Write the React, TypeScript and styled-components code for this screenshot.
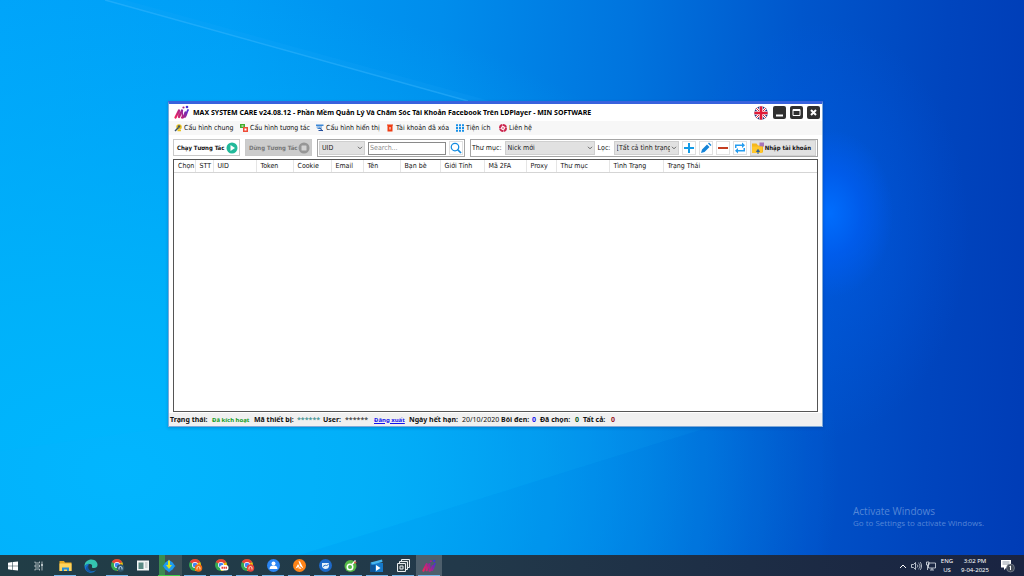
import React from 'react';
import styled, { createGlobalStyle } from 'styled-components';

const GlobalStyle = createGlobalStyle`
  * { box-sizing: border-box; }
  body { margin: 0; overflow: hidden; }
  button, input, select { font: inherit; color: inherit; margin: 0; padding: 0; border-radius: 0; }
  svg { display: block; flex: none; }
`;

const Desktop = styled.div`
  position: relative;
  display: flex;
  flex-direction: column;
  justify-content: flex-end;
  min-height: 100vh;
  overflow: hidden;
  font-family: 'DejaVu Sans Condensed', 'Noto Sans', sans-serif;
  font-size: 7px;
  line-height: 10px;
  color: #111;
  background:
    radial-gradient(ellipse 64px 84px at 81% 37%, rgba(0, 110, 255, 0.95), rgba(0, 96, 250, 0.55) 50%, rgba(0, 90, 240, 0) 100%),
    radial-gradient(ellipse 150px 210px at 80% 40%, rgba(0, 96, 240, 0.5), rgba(0, 90, 230, 0) 100%),
    radial-gradient(ellipse 70% 85% at 12% 82%, rgba(0, 184, 255, 0.95), rgba(0, 180, 250, 0.85) 35%, rgba(0, 168, 245, 0) 100%),
    linear-gradient(93deg, #00a4fa 0%, #009df6 22%, #008dec 42%, #0074de 60%, #0056cc 76%, #0045be 90%, #003cb6 100%);
`;

const Rays = styled.svg`
  position: absolute;
  inset: 0;
  width: 100%;
  height: 100%;
`;

const Window = styled.main`
  position: absolute;
  top: 101px;
  right: 201px;
  bottom: 149px;
  left: 168px;
  display: flex;
  flex-direction: column;
  background: #fff;
  border: 1px solid #7ea9d8;
  border-top: 3px solid #3862dd;
  box-shadow: 0 1px 3px rgba(0, 30, 90, 0.25);
`;

const TitleBar = styled.header`
  display: flex;
  align-items: center;
  gap: 4px;
  height: 17px;
  padding: 0 2px 0 5px;
`;

const Title = styled.h1`
  flex: 1;
  margin: 0;
  font-family: 'Noto Sans', sans-serif;
  font-size: 7px;
  line-height: 10px;
  color: #000;
  white-space: nowrap;
`;

const WindowButton = styled.button`
  display: flex;
  align-items: center;
  justify-content: center;
  width: 13px;
  height: 13px;
  border: 0;
  border-radius: 2px;
  background: #303030;
`;

const FlagButton = styled(WindowButton)`
  background: none;
  margin-right: 2px;
`;

const Menu = styled.nav`
  display: flex;
  align-items: center;
  height: 14px;
  padding-left: 5px;
  background: #f7f7f7;
`;

const MenuItem = styled.button<{ $w: number }>`
  display: flex;
  align-items: center;
  gap: 2px;
  width: ${(p) => p.$w}px;
  border: 0;
  background: none;
  white-space: nowrap;
`;

const Toolbar = styled.section`
  display: flex;
  gap: 5px;
  padding: 4px 4px 2px;
`;

const RunButton = styled.button`
  display: flex;
  align-items: center;
  justify-content: space-between;
  width: 67px;
  height: 17px;
  padding: 0 1px 0 3px;
  border: 1px solid #c9c9c9;
  background: #fff;
  font-weight: bold;
  font-size: 6px;
  white-space: nowrap;
  &:disabled { color: #777; background: #ccc; }
`;

const Group = styled.div<{ $grow?: boolean }>`
  display: flex;
  align-items: center;
  gap: 3px;
  flex: ${(p) => (p.$grow ? '1' : 'none')};
  min-width: 0;
  height: 18px;
  padding: 0 1px;
  border: 1px solid #a5a5a5;
  background: #fff;
  white-space: nowrap;
`;

const SelectBox = styled.span<{ $w: number }>`
  display: grid;
  flex: none;
  align-items: center;
  width: ${(p) => p.$w}px;
  height: 14px;
  color: #222;
  select {
    grid-area: 1 / 1;
    width: 100%;
    height: 14px;
    padding: 0 8px 0 2px;
    appearance: none;
    border: 1px solid #cfcfcf;
    background: #e1e1e1;
  }
  svg { grid-area: 1 / 1; justify-self: end; margin-right: 2px; pointer-events: none; }
`;

const SearchInput = styled.input`
  width: 78px;
  height: 13px;
  padding: 0 1px;
  border: 1px solid #8a8a8a;
  background: #fff;
  &::placeholder { color: #8c8c8c; opacity: 1; }
`;

const IconButton = styled.button`
  display: flex;
  flex: none;
  align-items: center;
  justify-content: center;
  width: 14px;
  height: 14px;
  border: 1px solid #e0e0e0;
  background: #fff;
`;

const ImportButton = styled.button`
  display: flex;
  flex: 1;
  align-items: center;
  justify-content: space-between;
  height: 16px;
  padding: 0 4px 0 0;
  border: 1px solid #d0d0d0;
  background: #e1e1e1;
  font-size: 6px;
  font-weight: bold;
  white-space: nowrap;
`;

const GridPanel = styled.section`
  flex: 1;
  margin: 0 4px;
  border: 1px solid #555;
  background: #fff;
`;

const Grid = styled.table`
  width: 100%;
  table-layout: fixed;
  border-collapse: collapse;
`;

const HeadCell = styled.th<{ $w?: number }>`
  width: ${(p) => (p.$w ? p.$w + 'px' : 'auto')};
  height: 12px;
  padding: 0 0 0 4px;
  border-right: 1px solid #e5e5e5;
  border-bottom: 1px solid #d5d5d5;
  font-weight: normal;
  text-align: left;
  white-space: nowrap;
  &:last-child { border-right: 0; }
`;

const StatusBar = styled.footer`
  display: flex;
  align-items: center;
  height: 13px;
  margin-top: 1px;
  padding-left: 1px;
  background: #f0f0f0;
  font-family: 'Noto Sans', sans-serif;
  white-space: nowrap;
`;

const Status = styled.span<{ $w: number; $color?: string; $plain?: boolean; $small?: boolean }>`
  width: ${(p) => p.$w}px;
  color: ${(p) => p.$color ?? '#111'};
  font-weight: ${(p) => (p.$plain ? 'normal' : 'bold')};
  font-size: ${(p) => (p.$small ? 6 : 7)}px;
`;

const Activate = styled.aside`
  position: absolute;
  left: calc(100% - 171px);
  bottom: 47px;
  color: #6f9bdf;
  font-family: 'Open Sans', sans-serif;
  font-size: 8px;
  line-height: 12px;
  white-space: nowrap;
  opacity: 0.75;
  strong { display: block; font-size: 10px; font-weight: normal; }
`;

const Taskbar = styled.footer`
  position: relative;
  display: flex;
  align-items: stretch;
  height: 21px;
  background: linear-gradient(90deg, #213d46 0%, #22394a 45%, #1b2843 85%, #1a2442 100%);
  color: #fff;
  font-family: 'Noto Sans', sans-serif;
  font-size: 6px;
  line-height: 9px;
`;

const TaskButton = styled.button<{ $state?: 'open' | 'progress' | 'active' }>`
  display: flex;
  align-items: center;
  justify-content: center;
  width: 26px;
  border: 0;
  background:
    ${(p) => (p.$state ? `linear-gradient(${p.$state === 'progress' ? '#3fd04a, #3fd04a' : '#76b9ed, #76b9ed'}) bottom / 22px 1px no-repeat,` : '')}
    ${(p) => p.$state === 'progress'
      ? 'linear-gradient(90deg, transparent 3px, #3c8a50 3px, #3c8a50 9px, #3d5158 9px)'
      : p.$state === 'active' ? 'linear-gradient(#4d5f6c, #4d5f6c)' : 'linear-gradient(transparent, transparent)'};
`;

const Tray = styled.div`
  display: flex;
  align-items: center;
  gap: 4px;
  margin-left: auto;
`;

const TrayText = styled.div<{ $w: number }>`
  width: ${(p) => p.$w}px;
  text-align: center;
  white-space: nowrap;
`;

const TrayEnd = styled.div`
  display: flex;
  align-items: center;
  align-self: stretch;
  width: 28px;
  padding-left: 4px;
`;

const Logo = ({ size = 15 }: { size?: number }) => (
  <svg width={size} height={size} viewBox="0 0 30 30" fill="none" strokeLinecap="round" aria-hidden="true">
    <defs>
      <linearGradient id="logo" gradientUnits="userSpaceOnUse" x1="2" y1="24" x2="28" y2="8">
        <stop offset="0" stopColor="#f0245c" /><stop offset="0.5" stopColor="#a8248c" /><stop offset="1" stopColor="#4530d8" />
      </linearGradient>
    </defs>
    <g stroke="url(#logo)" strokeWidth="4.500">
      <path d="M3 25 10 11M10 24l6-13M16 25c5 0 5-6 7-10" />
      <path d="M10 11v12M16 11l1 13" strokeWidth="3" />
      <path d="M22 24c3-3 3-9 6-14" strokeWidth="3.500" />
    </g>
    <circle cx="19" cy="5" r="2.200" fill="#a8248c" /><circle cx="26" cy="4" r="2.600" fill="#4530d8" />
  </svg>
);

const Caret = () => (
  <svg width="6" height="4" viewBox="0 0 6 4" fill="none" stroke="#666" aria-hidden="true"><path d="m1 .8 2 2 2-2" /></svg>
);

const Chrome = ({ badge, label }: { badge: string; label?: string }) => (
  <svg width="15" height="15" viewBox="0 0 30 30" aria-hidden="true">
    <circle cx="14" cy="14" r="12" fill="#35a853" />
    <path d="M14 14 24.4 8A12 12 0 0 1 14 26z" fill="#fbbc05" />
    <path d="M14 14 3.6 8a12 12 0 0 1 20.800 0z" fill="#ea4335" />
    <circle cx="14" cy="14" r="6" fill="#fff" /><circle cx="14" cy="14" r="4.600" fill="#4285f4" />
    {label === 'wide'
      ? <><rect x="12" y="14" width="17" height="11" rx="5" fill="#fff" /><path d="M15 19.500h11" stroke={badge} strokeWidth="4" strokeDasharray="3 1" /></>
      : <><circle cx="21" cy="20" r="7.500" fill={badge} /><path d="M18 23v-3a3 3 0 0 1 6 0v3" stroke={label === 'dark' ? '#bfe3ff' : '#ffe3c4'} strokeWidth="2" fill="none" /></>}
  </svg>
);

const columns: [string, number?][] = [
  ['Chọn', 21], ['STT', 18], ['UID', 43], ['Token', 37], ['Cookie', 38], ['Email', 32], ['Tên', 37],
  ['Bạn bè', 40], ['Giới Tính', 44], ['Mã 2FA', 42], ['Proxy', 30], ['Thư mục', 53], ['Tình Trạng', 54], ['Trạng Thái'],
];

export default function App() {
  return (
    <Desktop>
      <GlobalStyle />
      <Rays viewBox="0 0 1024 576" preserveAspectRatio="none" aria-hidden="true">
        <path d="M105 0 470 101H490L125 0z" fill="#32b4ff" opacity=".1" />
        <path d="M105 0 468 101" stroke="#45bcff" strokeWidth="1.500" opacity=".4" />
        <path d="M0 451 170 427H710L300 555H0z" fill="#20b8ff" opacity=".05" />
        <path d="M300 555 710 427H823V576H300z" fill="#0058d8" opacity=".06" />
      </Rays>

      <Window>
        <TitleBar>
          <Logo />
          <Title>MAX SYSTEM CARE v24.08.12 - Phần Mềm Quản Lý Và Chăm Sóc Tài Khoản Facebook Trên LDPlayer - MIN SOFTWARE</Title>
          <FlagButton aria-label="English">
            <svg width="14" height="14" viewBox="0 0 28 28">
              <clipPath id="flag"><circle cx="14" cy="14" r="13.500" /></clipPath>
              <g clipPath="url(#flag)">
                <path fill="#22357e" d="M0 0h28v28H0z" />
                <path d="m2 2 24 24M26 2 2 26" stroke="#fff" strokeWidth="5" />
                <path d="m2 2 24 24M26 2 2 26" stroke="#d8203c" strokeWidth="2" />
                <path d="M14 0v28M0 14h28" stroke="#fff" strokeWidth="7" />
                <path d="M14 0v28M0 14h28" stroke="#e01a38" strokeWidth="5" />
              </g>
            </svg>
          </FlagButton>
          <WindowButton aria-label="Minimize"><svg width="13" height="13" viewBox="0 0 13 13"><path d="M3 9.500h7" stroke="#fff" strokeWidth="2" /></svg></WindowButton>
          <WindowButton aria-label="Maximize"><svg width="13" height="13" viewBox="0 0 13 13" fill="none" stroke="#fff"><path d="M3 3.500h7v6H3z" /><path d="M3 4.500h7" /></svg></WindowButton>
          <WindowButton aria-label="Close"><svg width="13" height="13" viewBox="0 0 13 13"><path d="m4 4 5 5M9 4 4 9" stroke="#fff" strokeWidth="2" /></svg></WindowButton>
        </TitleBar>

        <Menu>
          <MenuItem $w={66}>
            <svg width="8" height="8" viewBox="0 0 16 16"><circle cx="10" cy="6" r="5.500" fill="#e8c11c" /><path d="m2 14 7-7" stroke="#35506c" strokeWidth="3" /><circle cx="10" cy="5" r="2.500" fill="#405a70" /><path d="M7 13h7" stroke="#e8c11c" strokeWidth="3" /></svg>
            Cấu hình chung
          </MenuItem>
          <MenuItem $w={76}>
            <svg width="8" height="8" viewBox="0 0 16 16"><path fill="#43ad2f" d="M0 0h10v8H0z" /><path fill="#fff" d="M3 3h4v2H3z" /><path fill="#ef4c38" d="M6 6h10v10H6z" /><path fill="#fff" d="M9 9h4v4H9z" /></svg>
            Cấu hình tương tác
          </MenuItem>
          <MenuItem $w={70}>
            <svg width="8" height="8" viewBox="0 0 16 16"><path fill="#3c87d6" d="M0 1h15v3H0zM1 5h11v2H1zM3 8h8v2H3z" /><path d="m7 8 7 6M5 13h9" stroke="#254f9e" strokeWidth="2" /></svg>
            Cấu hình hiển thị
          </MenuItem>
          <MenuItem $w={70}>
            <svg width="8" height="8" viewBox="0 0 16 16"><path fill="#f03d13" d="M3 3h10v12H3zM2 1h12v2H2z" /><path fill="#fff" d="M7 6h2v5H7z" /></svg>
            Tài khoản đã xóa
          </MenuItem>
          <MenuItem $w={43}>
            <svg width="8" height="8" viewBox="0 0 16 16"><path d="M0 2.500h16M0 8h16M0 13.500h16" stroke="#1790e8" strokeWidth="4" strokeDasharray="4 2" /></svg>
            Tiện ích
          </MenuItem>
          <MenuItem $w={40}>
            <svg width="8" height="8" viewBox="0 0 16 16"><circle cx="8" cy="8" r="6" fill="#fff" stroke="#cc2850" strokeWidth="4" strokeDasharray="8 1" /><circle cx="8" cy="8" r="2" fill="#e27a93" /></svg>
            Liên hệ
          </MenuItem>
        </Menu>

        <Toolbar>
          <RunButton>
            Chạy Tương Tác
            <svg width="12" height="12" viewBox="0 0 24 24"><circle cx="12" cy="12" r="11" fill="#22b99a" /><path d="m9 6 9 6-9 6z" fill="#fff" /></svg>
          </RunButton>
          <RunButton disabled>
            Dừng Tương Tác
            <svg width="12" height="12" viewBox="0 0 24 24"><circle cx="12" cy="12" r="11" fill="#969696" /><rect x="7" y="7" width="10" height="10" rx="1" fill="#d2d2d2" /></svg>
          </RunButton>
          <Group>
            <SelectBox $w={46}><select aria-label="Search field"><option>UID</option></select><Caret /></SelectBox>
            <SearchInput aria-label="Search" placeholder="Search..." />
            <IconButton aria-label="Search">
              <svg width="12" height="12" viewBox="0 0 24 24" fill="none" stroke="#148be0"><circle cx="10" cy="10" r="7.500" strokeWidth="2.500" /><path d="m15 15 7 7" strokeWidth="3.500" /></svg>
            </IconButton>
          </Group>
          <Group $grow>
            <label htmlFor="folder">Thư mục:</label>
            <SelectBox $w={90}><select id="folder"><option>Nick mới</option></select><Caret /></SelectBox>
            <label htmlFor="filter">Lọc:</label>
            <SelectBox $w={65}><select id="filter"><option>[Tất cả tình trạng]</option></select><Caret /></SelectBox>
            <IconButton aria-label="Add"><svg width="12" height="12" viewBox="0 0 12 12"><path d="M6 1v10M1 6h10" stroke="#149be6" strokeWidth="2" /></svg></IconButton>
            <IconButton aria-label="Edit"><svg width="12" height="12" viewBox="0 0 24 24" fill="#1584d8"><path d="m2 22 2-7L14 5l5 5L9 20zM16 3l2-2 5 5-2 2z" /></svg></IconButton>
            <IconButton aria-label="Remove"><svg width="12" height="12" viewBox="0 0 12 12"><path d="M1 6h10" stroke="#c43d20" strokeWidth="2" /></svg></IconButton>
            <IconButton aria-label="Refresh"><svg width="12" height="12" viewBox="0 0 24 24" fill="#259df0"><path d="M2 12V5h14V1l6 5.500-6 5.500V8H5v4zM22 12v7H8v4l-6-5.500L8 12v4h11v-4z" /></svg></IconButton>
            <ImportButton>
              <svg width="14" height="14" viewBox="0 0 28 28"><path d="M2 5h9l3 4h10v14H2z" fill="#f5b81d" /><path d="M17 3h9v8h-9z" fill="#a874b8" /><path d="M2 11h20v13H2z" fill="#ffc72b" /><path d="M14 26v-6M11 21l3-4 3 4z" stroke="#295f9c" strokeWidth="2" fill="#295f9c" /></svg>
              Nhập tài khoản
            </ImportButton>
          </Group>
        </Toolbar>

        <GridPanel>
          <Grid>
            <thead><tr>{columns.map(([name, w]) => <HeadCell key={name} $w={w} scope="col">{name}</HeadCell>)}</tr></thead>
          </Grid>
        </GridPanel>

        <StatusBar>
          <Status $w={42}>Trạng thái:</Status>
          <Status $w={42} $small $color="#119a1c">Đã kích hoạt</Status>
          <Status $w={43}>Mã thiết bị:</Status>
          <Status $w={26} $plain $color="#117d7d">******</Status>
          <Status $w={22}>User:</Status>
          <Status $w={29} $plain>******</Status>
          <Status $w={35} as="a" href="#logout" $small $color="#1414ee">Đăng xuất</Status>
          <Status $w={53}>Ngày hết hạn:</Status>
          <Status $w={39} $plain>20/10/2020</Status>
          <Status $w={31}>Bôi đen:</Status>
          <Status $w={8} $color="#1414ee">0</Status>
          <Status $w={35}>Đã chọn:</Status>
          <Status $w={8} $color="#0b5a22">0</Status>
          <Status $w={28}>Tất cả:</Status>
          <Status $w={8} $color="#99151f">0</Status>
        </StatusBar>
      </Window>

      <Activate>
        <strong>Activate Windows</strong>
        Go to Settings to activate Windows.
      </Activate>

      <Taskbar>
        <TaskButton aria-label="Start"><svg width="10" height="10" viewBox="0 0 18 18" fill="#fff"><path d="m0 3 8-1v6.500H0zM9 2l9-1v7.500H9zM0 9.500h8V16l-8-1zM9 9.500h9V17l-9-1z" /></svg></TaskButton>
        <TaskButton aria-label="Task view"><svg width="10" height="10" viewBox="0 0 20 20" fill="none" stroke="#d5dcdf" strokeWidth="1.500"><path d="M2 1v3h9V1M2 8h9v4H2zM2 19v-3h9v3M16 1v18" /><path d="M14 8h4" strokeWidth="3" /></svg></TaskButton>
        <TaskButton $state="open" aria-label="File Explorer"><svg width="13" height="13" viewBox="0 0 26 26"><path d="M1 4h9l2 3h13v17H1z" fill="#e9a922" /><path d="M1 9h24v15H1z" fill="#ffd45c" /><path d="M6 24v-7h14v7h-4v-3h-6v3z" fill="#278ed8" /></svg></TaskButton>
        <TaskButton aria-label="Edge"><svg width="14" height="14" viewBox="0 0 28 28"><path d="M1 15C1 5 8 1 15 1c8 0 12 6 12 11 0 4-3 6-7 6-3 0-5-1-4-3 1-3-1-5-4-5C6 10 3 12 1 15z" fill="#35c5b0" /><path d="M1 15c2-4 6-6 10-6-5 3-5 12 2 15 3 1 7 1 11-2-4 6-10 6-14 5-6-2-9-7-9-12z" fill="#1679d2" /><path d="M10 12c-4 5 0 13 8 12-4 3-9 3-12 0-4-4-2-10 4-12z" fill="#1455a5" /></svg></TaskButton>
        <TaskButton $state="open" aria-label="Chrome"><Chrome badge="#315870" label="dark" /></TaskButton>
        <TaskButton aria-label="Viewer"><svg width="12" height="11" viewBox="0 0 24 22"><path fill="#f3f5f5" d="M0 1h24v20H0z" /><path fill="#5b8a84" d="M3 5h10v13H3z" /><path d="M16 6h5M16 10h5M16 14h5" stroke="#a8b1b3" strokeWidth="2" /></svg></TaskButton>
        <TaskButton $state="progress" aria-label="Download manager"><svg width="14" height="14" viewBox="0 0 28 28"><path d="m14 1 13 13-13 13L1 14z" fill="#168bea" /><circle cx="14" cy="14" r="10" fill="#1f9cf0" /><path d="M12 3h4v9h4l-6 8-6-8h4z" fill="#d9e526" /></svg></TaskButton>
        <TaskButton $state="open" aria-label="Chrome profile 2"><Chrome badge="#ef6c16" /></TaskButton>
        <TaskButton $state="open" aria-label="Chrome profile 3"><Chrome badge="#e83b3b" label="wide" /></TaskButton>
        <TaskButton $state="open" aria-label="Chrome profile 4"><Chrome badge="#e8433b" /></TaskButton>
        <TaskButton $state="open" aria-label="Contacts"><svg width="13" height="13" viewBox="0 0 26 26"><circle cx="13" cy="13" r="13" fill="#2b86f4" /><circle cx="13" cy="9" r="4" fill="#fff" /><path d="M5 20c0-5 3-7 8-7s8 2 8 7z" fill="#fff" /></svg></TaskButton>
        <TaskButton $state="open" aria-label="Launcher"><svg width="13" height="13" viewBox="0 0 26 26"><circle cx="13" cy="13" r="13" fill="#ff8417" /><path d="m11 4 3 1 7 14-7-5zM10 10l3 5-8 4zM9 18l5-2 3 4z" fill="#fff" /></svg></TaskButton>
        <TaskButton $state="open" aria-label="Sync"><svg width="13" height="13" viewBox="0 0 26 26"><circle cx="13" cy="13" r="13" fill="#1e69c9" /><path d="M6 8h14v5c0 5-3 7-7 7s-7-3-7-7z" fill="#e8f1fb" /><path d="m8 15 5-3 2 2 5-5" stroke="#1e69c9" strokeWidth="2" fill="none" /></svg></TaskButton>
        <TaskButton $state="open" aria-label="Unikey"><svg width="14" height="14" viewBox="0 0 28 28"><circle cx="13" cy="14" r="12" fill="#56b947" /><circle cx="12" cy="16" r="7" fill="#fff" /><circle cx="12" cy="16" r="4" fill="#56b947" /><path d="m16 11 7-8" stroke="#fff" strokeWidth="3" /><path d="M20 7h5M22 4v6" stroke="#e85849" strokeWidth="1.500" /></svg></TaskButton>
        <TaskButton $state="open" aria-label="Video editor"><svg width="14" height="14" viewBox="0 0 28 28"><path fill="#1579c9" d="M1 8h25v18H1z" /><path fill="#46b6ef" d="m1 7 23-6 1 5-20 5z" /><path fill="#0c5599" d="M1 12h9v14H1z" /><path fill="#fff" d="m12 12 9 6-9 6z" /></svg></TaskButton>
        <TaskButton $state="open" aria-label="Emulator"><svg width="13" height="13" viewBox="0 0 26 26" fill="#33434b" stroke="#e8ecee" strokeWidth="2"><path d="M9 1h16v16H9z" /><path d="M5 5h16v16H5z" /><path d="M1 9h16v16H1z" /><path d="M6 14h6v6H6z" /></svg></TaskButton>
        <TaskButton $state="active" aria-label="Max System Care"><Logo size={14} /></TaskButton>
        <Tray>
          <svg width="8" height="6" viewBox="0 0 8 6" fill="none" stroke="#fff"><path d="m1 5 3-3 3 3" /></svg>
          <svg width="11" height="10" viewBox="0 0 22 20" fill="none" stroke="#e8edf4" strokeWidth="1.500"><path d="M1 7h4l4-4v14l-4-4H1zM12 7c2 2 2 4 0 6M15 4c4 3 4 9 0 12M18 2c4 4 4 12 0 16" /></svg>
          <svg width="10" height="10" viewBox="0 0 20 20" fill="none" stroke="#e8edf4" strokeWidth="1.500"><path d="M5 4h14v10H5zM8 18h8M12 14v4M1 2h5v6H1zM3 8v10" /></svg>
          <TrayText $w={14}>ENG<br />US</TrayText>
          <TrayText $w={34}>3:02 PM<br />9-04-2025</TrayText>
          <TrayEnd>
            <svg width="15" height="15" viewBox="0 0 30 30"><path d="M2 4h20v15h-9l-5 5v-5H2z" fill="#fff" /><path d="M5 8h14M5 12h14" stroke="#6a7588" strokeWidth="1.500" /><circle cx="21" cy="20" r="8" fill="#444c59" stroke="#9aa2ad" /><path d="m19 17 2-1v8" stroke="#fff" strokeWidth="2" fill="none" /></svg>
          </TrayEnd>
        </Tray>
      </Taskbar>
    </Desktop>
  );
}
